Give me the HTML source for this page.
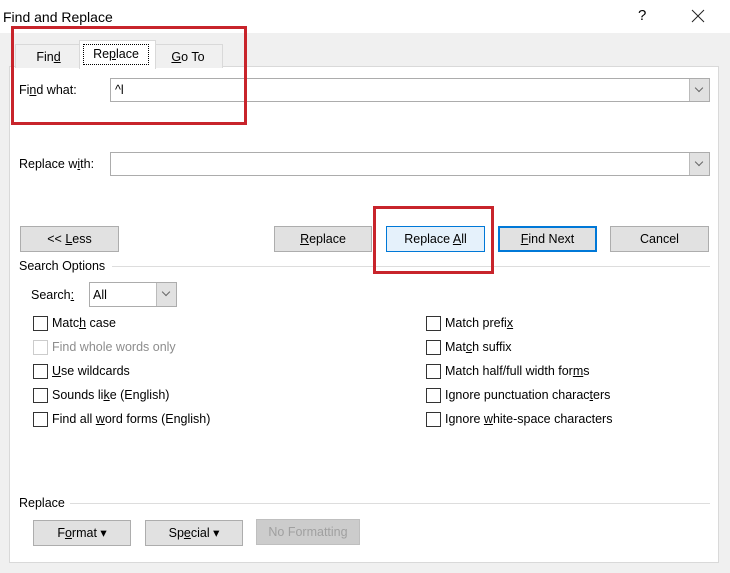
<!DOCTYPE html><html><head><style>
body{margin:0;width:730px;height:573px;background:#f0f0f0;font-family:"Liberation Sans",sans-serif;font-size:12.5px;color:#000;position:relative;overflow:hidden}
.a{position:absolute}
.btn{position:absolute;background:#e1e1e1;border:1px solid #adadad;text-align:center;box-sizing:border-box;line-height:24px}
.cb{position:absolute;width:13px;height:13px;border:1px solid #333;background:#fff}
.lbl{position:absolute}
.dd{position:absolute;right:0;top:0;width:20px;height:100%;background:#e1e1e1;border-left:1px solid #bbb;box-sizing:border-box}
.dd:after{content:"";position:absolute;left:6px;top:6px;width:5px;height:5px;border-right:1px solid #666;border-bottom:1px solid #666;transform:rotate(45deg)}
.red{position:absolute;border:3px solid #c8242b;box-sizing:border-box}
</style></head><body>
<div class="a" style="left:0;top:0;width:730px;height:33px;background:#fff"></div>
<div class="a" style="left:3px;top:9px;font-size:14px">Find and Replace</div>
<div class="a" style="left:638px;top:7px;font-size:15px">?</div>
<svg class="a" style="left:691px;top:9px" width="14" height="14"><path d="M1 1L13 13M13 1L1 13" stroke="#222" stroke-width="1"/></svg>
<div class="a" style="left:9px;top:66px;width:710px;height:497px;background:#fff;border:1px solid #d9d9d9;box-sizing:border-box"></div>
<div class="a" style="left:15px;top:44px;width:65px;height:23px;background:#f0f0f0;border:1px solid #d9d9d9;border-bottom:none;text-align:center;line-height:24px">Fin<u>d</u></div>
<div class="a" style="left:153px;top:44px;width:68px;height:23px;background:#f0f0f0;border:1px solid #d9d9d9;border-bottom:none;text-align:center;line-height:24px"><u>G</u>o To</div>
<div class="a" style="left:79px;top:40px;width:75px;height:28px;background:#fff;border:1px solid #d9d9d9;border-bottom:none"></div>
<div class="a" style="left:83px;top:44px;width:64px;height:19px;border:1px dotted #000;text-align:center;line-height:19px">Re<u>p</u>lace</div>
<div class="a" style="left:19px;top:83px">Fi<u>n</u>d what:</div>
<div class="a" style="left:110px;top:78px;width:600px;height:24px;border:1px solid #acacac;background:#fff;box-sizing:border-box"><span class="a" style="left:4px;top:4px">^l</span><div class="dd"></div></div>
<div class="a" style="left:19px;top:157px">Replace w<u>i</u>th:</div>
<div class="a" style="left:110px;top:152px;width:600px;height:24px;border:1px solid #acacac;background:#fff;box-sizing:border-box"><div class="dd"></div></div>
<div class="btn" style="left:20px;top:226px;width:99px;height:26px">&lt;&lt; <u>L</u>ess</div>
<div class="btn" style="left:274px;top:226px;width:98px;height:26px"><u>R</u>eplace</div>
<div class="btn" style="left:386px;top:226px;width:99px;height:26px;background:#e5f1fb;border-color:#0078d7">Replace <u>A</u>ll</div>
<div class="btn" style="left:498px;top:226px;width:99px;height:26px;border:2px solid #0078d7;line-height:22px"><u>F</u>ind Next</div>
<div class="btn" style="left:610px;top:226px;width:99px;height:26px">Cancel</div>
<div class="a" style="left:19px;top:259px">Search Options</div>
<div class="a" style="left:112px;top:266px;width:598px;height:1px;background:#ddd"></div>
<div class="a" style="left:31px;top:288px">Search<u>:</u></div>
<div class="a" style="left:89px;top:282px;width:88px;height:25px;border:1px solid #acacac;background:#fff;box-sizing:border-box"><span class="a" style="left:3px;top:5px">All</span><div class="dd"></div></div>
<div class="cb" style="left:33px;top:316px"></div><div class="lbl" style="left:52px;top:316px">Matc<u>h</u> case</div>
<div class="cb" style="left:33px;top:340px;border-color:#ccc"></div><div class="lbl" style="left:52px;top:340px;color:#8d8d8d">Find whole words only</div>
<div class="cb" style="left:33px;top:364px"></div><div class="lbl" style="left:52px;top:364px"><u>U</u>se wildcards</div>
<div class="cb" style="left:33px;top:388px"></div><div class="lbl" style="left:52px;top:388px">Sounds li<u>k</u>e (English)</div>
<div class="cb" style="left:33px;top:412px"></div><div class="lbl" style="left:52px;top:412px">Find all <u>w</u>ord forms (English)</div>
<div class="cb" style="left:426px;top:316px"></div><div class="lbl" style="left:445px;top:316px">Match prefi<u>x</u></div>
<div class="cb" style="left:426px;top:340px"></div><div class="lbl" style="left:445px;top:340px">Mat<u>c</u>h suffix</div>
<div class="cb" style="left:426px;top:364px"></div><div class="lbl" style="left:445px;top:364px">Match half/full width for<u>m</u>s</div>
<div class="cb" style="left:426px;top:388px"></div><div class="lbl" style="left:445px;top:388px">Ignore punctuation charac<u>t</u>ers</div>
<div class="cb" style="left:426px;top:412px"></div><div class="lbl" style="left:445px;top:412px">Ignore <u>w</u>hite-space characters</div>
<div class="a" style="left:19px;top:496px">Replace</div>
<div class="a" style="left:70px;top:503px;width:640px;height:1px;background:#ddd"></div>
<div class="btn" style="left:33px;top:520px;width:98px;height:26px">F<u>o</u>rmat ▾</div>
<div class="btn" style="left:145px;top:520px;width:98px;height:26px">Sp<u>e</u>cial ▾</div>
<div class="btn" style="left:256px;top:519px;width:104px;height:26px;background:#cccccc;border-color:#bfbfbf;color:#a0a0a0">No Formatting</div>
<div class="red" style="left:11px;top:26px;width:236px;height:99px"></div>
<div class="red" style="left:373px;top:206px;width:121px;height:68px"></div>
</body></html>
